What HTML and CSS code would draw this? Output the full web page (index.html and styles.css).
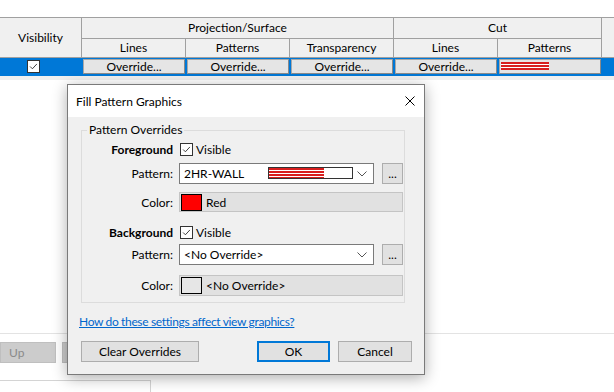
FILE: index.html
```html
<!DOCTYPE html>
<html>
<head>
<meta charset="utf-8">
<link rel="stylesheet" href="styles.css">
</head>
<body>
<div class="page">
  <div class="topgap"></div>
  <div class="vg">
    <div class="hc vis">Visibility</div>
    <div class="hc proj">Projection/Surface</div>
    <div class="hc cut">Cut</div>
    <div class="hc extra"></div>
    <div class="hc">Lines</div>
    <div class="hc">Patterns</div>
    <div class="hc">Transparency</div>
    <div class="hc">Lines</div>
    <div class="hc">Patterns</div>
    <div class="rc chkcell"><span class="cb"><svg viewBox="0 0 13 13" width="11" height="11"><path d="M2.5 6.5 L5.2 9.2 L10.5 3.5" fill="none" stroke="#333" stroke-width="1.1"/></svg></span></div>
    <div class="rc"><span class="ob">Override...</span></div>
    <div class="rc"><span class="ob">Override...</span></div>
    <div class="rc"><span class="ob">Override...</span></div>
    <div class="rc"><span class="ob">Override...</span></div>
    <div class="rc"><span class="ob swbtn"><span class="stripes small"></span></span></div>
    <div class="rc"></div>
  </div>
  <div class="strip"></div>
  <div class="filler"></div>
  <div class="bottom">
    <div class="btnrow"><span class="pbtn up">Up</span><span class="pbtn two"></span></div>
    <div class="box"></div>
  </div>
</div>

<div class="dialog">
  <div class="titlebar">
    <span class="title">Fill Pattern Graphics</span>
    <svg class="close" viewBox="0 0 10 10" width="10" height="10"><path d="M0.5 0.5 L9.5 9.5 M9.5 0.5 L0.5 9.5" stroke="#000" stroke-width="1"/></svg>
  </div>
  <div class="dbody">
    <fieldset class="group">
      <legend>Pattern Overrides</legend>
      <div class="row head fg">
        <span class="lbl bold">Foreground</span>
        <span class="cb dcb"><svg viewBox="0 0 13 13" width="11" height="11"><path d="M2.5 6.5 L5.2 9.2 L10.5 3.5" fill="none" stroke="#333" stroke-width="1.1"/></svg></span>
        <span class="vis-txt">Visible</span>
      </div>
      <div class="row ctl p1">
        <span class="lbl">Pattern:</span>
        <div class="combo">
          <span class="ctext">2HR-WALL</span>
          <span class="cswatch"><span class="stripes big"></span></span>
          <svg class="chev" viewBox="0 0 10 6" width="10" height="6"><path d="M0.5 0.5 L5 5 L9.5 0.5" fill="none" stroke="#555" stroke-width="1"/></svg>
        </div>
        <span class="dots">...</span>
      </div>
      <div class="row ctl c1">
        <span class="lbl">Color:</span>
        <div class="cfield"><span class="csw red"></span><span class="ctxt">Red</span></div>
      </div>
      <div class="row head bg">
        <span class="lbl bold">Background</span>
        <span class="cb dcb"><svg viewBox="0 0 13 13" width="11" height="11"><path d="M2.5 6.5 L5.2 9.2 L10.5 3.5" fill="none" stroke="#333" stroke-width="1.1"/></svg></span>
        <span class="vis-txt">Visible</span>
      </div>
      <div class="row ctl p2">
        <span class="lbl">Pattern:</span>
        <div class="combo">
          <span class="ctext wide">&lt;No Override&gt;</span>
          <svg class="chev" viewBox="0 0 10 6" width="10" height="6"><path d="M0.5 0.5 L5 5 L9.5 0.5" fill="none" stroke="#555" stroke-width="1"/></svg>
        </div>
        <span class="dots">...</span>
      </div>
      <div class="row ctl c2">
        <span class="lbl">Color:</span>
        <div class="cfield"><span class="csw none"></span><span class="ctxt">&lt;No Override&gt;</span></div>
      </div>
    </fieldset>
    <a class="link" href="#">How do these settings affect view graphics?</a>
    <div class="actions">
      <span class="btn clear">Clear Overrides</span>
      <span class="btn ok">OK</span>
      <span class="btn cancel">Cancel</span>
    </div>
  </div>
</div>
</body>
</html>
```

FILE: styles.css
```css
* { box-sizing: border-box; }
html, body { margin: 0; padding: 0; }
body {
  width: 614px;
  height: 392px;
  overflow: hidden;
  background: #fff;
  font-family: Lato, "Noto Sans", sans-serif;
  font-size: 12px;
  color: #000;
  position: relative;
}
.page {
  display: flex;
  flex-direction: column;
  height: 392px;
}
.topgap { height: 17px; flex: none; }
.vg {
  flex: none;
  display: grid;
  grid-template-columns: 82px 104px 104px 104px 104px 104px 1fr;
  grid-template-rows: 21px 19px 18px;
  border-top: 1px solid #a0a0a0;
}
.hc {
  background: #f0f0f0;
  border-right: 1px solid #a0a0a0;
  border-bottom: 1px solid #a0a0a0;
  display: flex;
  align-items: center;
  justify-content: center;
  line-height: 16px;
}
.hc.vis { grid-row: 1 / 3; grid-column: 1; }
.hc.proj { grid-column: 2 / 5; }
.hc.cut { grid-column: 5 / 7; }
.hc.extra { grid-row: 1 / 3; grid-column: 7; border-right: none; }
.rc {
  background: #0078d7;
  padding: 1px 1px 2px 1px;
  display: flex;
}
.rc.chkcell { justify-content: flex-start; align-items: flex-start; padding: 2px 0 0 27px; }
.cb {
  width: 13px;
  height: 13px;
  background: #fff;
  border: 1px solid #333;
  display: flex;
  align-items: center;
  justify-content: center;
}
.ob {
  flex: 1;
  background: #e5e5e5;
  border: 1px solid #a8a8a8;
  border-right-color: #8a8a8a;
  border-bottom-color: #8a8a8a;
  display: flex;
  align-items: center;
  justify-content: center;
  line-height: 13px;
  font-size: 12px;
}
.ob.swbtn { justify-content: flex-start; align-items: flex-start; padding: 2px 0 0 1px; }
.stripes {
  display: block;
  background: repeating-linear-gradient(to bottom, #d81e1e 0, #d81e1e 2px, #fff 2px, #fff 3px);
}
.stripes.small { width: 48px; height: 8px; }
.strip { height: 4px; background: #f0f0f0; flex: none; }
.filler { flex: 1; }
.bottom {
  flex: none;
  height: 59px;
  border-top: 1px solid #e3e3e3;
}
.btnrow {
  display: flex;
  gap: 6px;
  margin-top: 8px;
  height: 21px;
}
.pbtn {
  background: #cccccc;
  border: 1px solid #bfbfbf;
  color: #8a8a8a;
  display: flex;
  align-items: center;
  padding-left: 8px;
}
.pbtn.up { width: 56px; }
.pbtn.two { width: 40px; }
.box {
  margin-top: 17px;
  width: 151px;
  height: 20px;
  border-top: 1px solid #d4d4d4;
  border-right: 1px solid #d4d4d4;
}

/* dialog */
.dialog {
  position: absolute;
  left: 67px;
  top: 84px;
  width: 358px;
  height: 291px;
  background: #f0f0f0;
  border: 1px solid #7a7a7a;
  box-shadow: 0 3px 14px rgba(0,0,0,0.32);
  display: flex;
  flex-direction: column;
}
.titlebar {
  height: 32px;
  background: #fff;
  display: flex;
  align-items: center;
  justify-content: space-between;
  padding: 0 9px 0 8px;
  flex: none;
}
.title { font-size: 12px; }
.close { display: block; }
.dbody {
  padding: 0 11px 0 13px;
  display: flex;
  flex-direction: column;
  align-items: flex-start;
}
.group {
  margin: 5px 0 0 0;
  padding: 0 1px 6px 0;
  width: 324px;
  border: 1px solid #dcdcdc;
  min-width: 0;
}
.group legend {
  margin-left: 5px;
  padding: 0 2px;
  line-height: 16px;
  color: #000;
}
.row {
  display: flex;
  align-items: center;
}
.lbl {
  width: 91px;
  text-align: right;
  margin-right: 6px;
  flex: none;
}
.bold { font-weight: bold; }
.row.head { height: 16px; }
.row.fg { margin-top: 3px; }
.row.p1 { margin-top: 6px; }
.row.c1 { margin-top: 8px; }
.row.bg { margin-top: 12px; }
.row.p2 { margin-top: 4px; }
.row.c2 { margin-top: 10px; }
.dcb { margin-left: 1px; }
.vis-txt { margin-left: 3px; }
.combo {
  width: 195px;
  height: 21px;
  background: #fff;
  border: 1px solid #7a7a7a;
  display: flex;
  align-items: center;
  padding-left: 4px;
}
.ctext { width: 84px; flex: none; }
.ctext.wide { width: auto; flex: 1; }
.cswatch {
  align-self: flex-start;
  margin-top: 3px;
  width: 85px;
  height: 12px;
  border: 1px solid #333;
  background: #fff;
  display: flex;
}
.stripes.big { width: 55px; height: 10px; }
.chev { margin-left: auto; margin-right: 6px; }
.dots {
  margin-left: 8px;
  width: 21px;
  height: 21px;
  background: #e1e1e1;
  border: 1px solid #adadad;
  display: flex;
  justify-content: center;
  align-items: flex-end;
  padding-bottom: 3px;
  line-height: 12px;
}
.cfield {
  width: 225px;
  height: 20px;
  background: #e1e1e1;
  border: 1px solid #c4c4c4;
  display: flex;
  align-items: center;
  padding-left: 1px;
}
.row.c2 .cfield { height: 21px; }
.csw {
  width: 21px;
  height: 17px;
  border: 1px solid #000;
}
.csw.red { background: #ff0000; }
.csw.none { background: #e6e6e6; }
.ctxt { margin-left: 4px; }
.link {
  margin-top: 11px;
  margin-left: -2px;
  color: #0066cc;
  text-decoration: underline;
  line-height: 16px;
  letter-spacing: -0.35px;
}
.actions {
  margin-top: 11px;
  display: flex;
  width: 331px;
}
.btn {
  height: 21px;
  background: #e1e1e1;
  border: 1px solid #adadad;
  display: flex;
  align-items: center;
  justify-content: center;
}
.btn.clear { width: 118px; }
.btn.ok { width: 73px; margin-left: auto; border: 2px solid #0078d7; }
.btn.cancel { width: 74px; margin-left: 8px; }
```
